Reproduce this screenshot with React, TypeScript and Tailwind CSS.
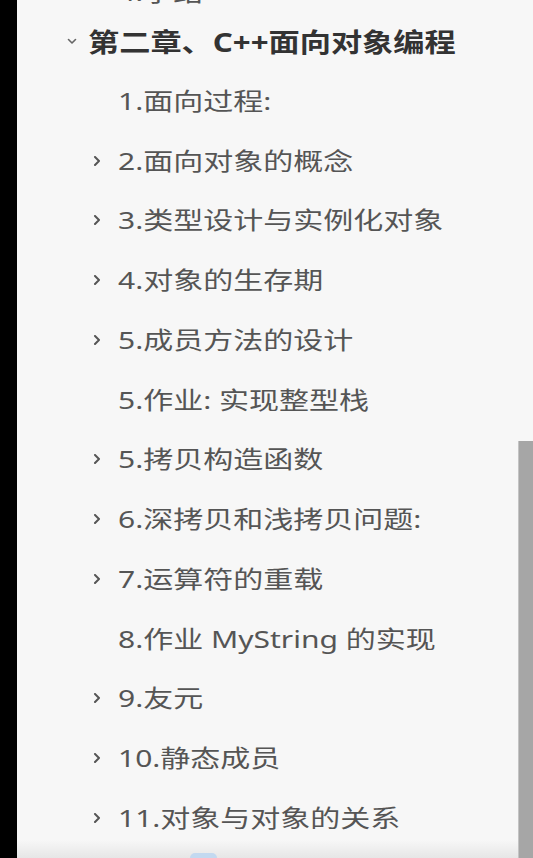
import React from "react";

type Item = { label: string; expandable: boolean };

const items: Item[] = [
    { label: "1.面向过程:", expandable: false },
    { label: "2.面向对象的概念", expandable: true },
    { label: "3.类型设计与实例化对象", expandable: true },
    { label: "4.对象的生存期", expandable: true },
    { label: "5.成员方法的设计", expandable: true },
    { label: "5.作业: 实现整型栈", expandable: false },
    { label: "5.拷贝构造函数", expandable: true },
    { label: "6.深拷贝和浅拷贝问题:", expandable: true },
    { label: "7.运算符的重载", expandable: true },
    { label: "8.作业 MyString 的实现", expandable: false },
    { label: "9.友元", expandable: true },
    { label: "10.静态成员", expandable: true },
    { label: "11.对象与对象的关系", expandable: true },
];

const ChevronRight = () => (
    <svg width="8" height="10" viewBox="0 0 8 10" className="shrink-0">
        <path d="M2 1 L6 5 L2 9" fill="none" stroke="#555" strokeWidth="2" strokeLinecap="round" strokeLinejoin="round" />
    </svg>
);

const ChevronDown = () => (
    <svg width="10" height="7" viewBox="0 0 10 7" className="shrink-0">
        <path d="M1.5 1.5 L5 5 L8.5 1.5" fill="none" stroke="#666" strokeWidth="1.6" strokeLinecap="round" strokeLinejoin="round" />
    </svg>
);

const OutlineRow = ({ item }: { item: Item }) => (
    <div className={`flex h-[59.75px] shrink-0 items-center ${item.expandable ? "pl-[76px] gap-[17px]" : "pl-[101px]"}`}>
        {item.expandable && <ChevronRight />}
        <span className="inline-block origin-left scale-x-125 whitespace-nowrap text-[24px] leading-none text-[#555]">
            {item.label}
        </span>
    </div>
);

export default function App() {
    return (
        <div
            className="flex h-[858px] w-[533px] overflow-hidden bg-black"
            style={{ fontFamily: '"Noto Sans", "Noto Sans CJK SC", sans-serif' }}
        >
            {/* left black edge */}
            <div className="w-[17px] shrink-0 bg-black" />

            {/* outline panel */}
            <div className="flex flex-1 flex-col bg-[#f7f7f7]">
                <div className="flex flex-1 flex-col overflow-hidden">
                    {/* previous entry, cut at the top */}
                    <div className="-mt-[24px] flex h-[32px] shrink-0 items-center pl-[101px]">
                        <span className="inline-block origin-left scale-x-125 whitespace-nowrap text-[24px] leading-none text-[#555]">
                            4.小结
                        </span>
                    </div>

                    {/* chapter heading */}
                    <div className="mt-[4px] flex h-[59px] shrink-0 items-center gap-[11px] pl-[50px]">
                        <ChevronDown />
                        <span className="inline-block origin-left scale-x-[1.2] whitespace-nowrap text-[26px] font-bold leading-none text-[#333]">
                            第二章、C++面向对象编程
                        </span>
                    </div>

                    {items.map((item, idx) => (
                        <OutlineRow key={idx} item={item} />
                    ))}
                </div>

                {/* bottom edge */}
                <div className="flex h-[18px] shrink-0 items-end bg-gradient-to-b from-[#f7f7f7] to-[#e6e6e6]">
                    <div className="ml-[173px] h-[5px] w-[27px] rounded-t-full bg-[#c3d9f0]" />
                </div>
            </div>

            {/* scrollbar */}
            <div className="flex w-[15px] shrink-0 flex-col bg-[#f7f7f7]">
                <div className="h-[441px] shrink-0" />
                <div className="flex-1 border-l border-[#c4c4c4] bg-[#a6a6a6]" />
            </div>
        </div>
    );
}
